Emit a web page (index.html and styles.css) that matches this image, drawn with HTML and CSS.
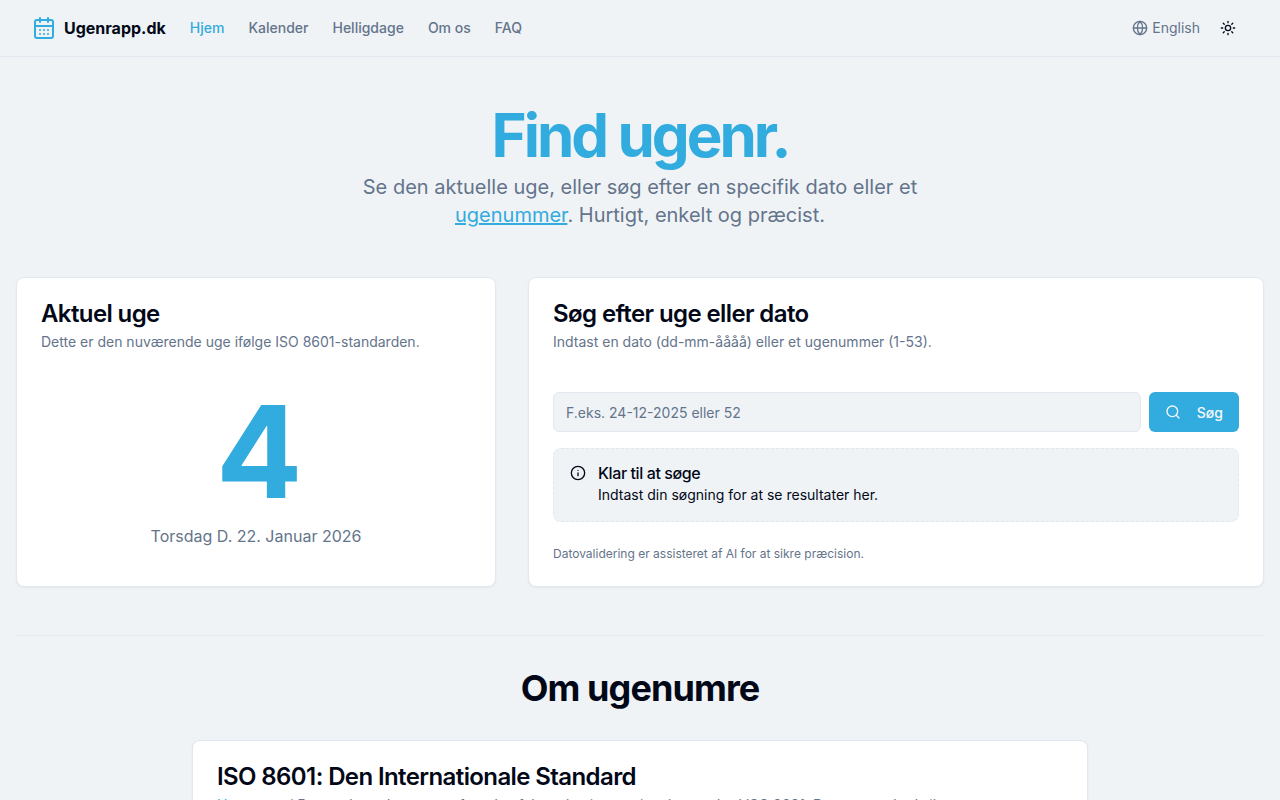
FILE: index.html
```html
<!DOCTYPE html>
<html lang="da">

<head>
    <meta charset="UTF-8">
    <meta name="viewport" content="width=device-width, initial-scale=1.0">
    <title>Ugenrapp.dk</title>
    <link rel="stylesheet" href="styles.css">
</head>

<body>
    <header class="site-header">
        <a class="brand" href="#">
            <svg class="icon icon-brand" viewBox="0 0 24 24" aria-hidden="true">
                <path d="M8 2v4M16 2v4" />
                <rect width="18" height="18" x="3" y="4" rx="2" />
                <path d="M3 10h18M8 14h.01M12 14h.01M16 14h.01M8 18h.01M12 18h.01M16 18h.01" />
            </svg>
            Ugenrapp.dk
        </a>
        <nav class="main-nav">
            <a class="active" href="#">Hjem</a>
            <a href="#kalender">Kalender</a>
            <a href="#helligdage">Helligdage</a>
            <a href="#om-os">Om os</a>
            <a href="#faq">FAQ</a>
        </nav>
        <div class="header-tools">
            <a class="language" href="#en">
                <svg class="icon" viewBox="0 0 24 24" aria-hidden="true">
                    <circle cx="12" cy="12" r="10" />
                    <path d="M12 2a14.5 14.5 0 0 0 0 20 14.5 14.5 0 0 0 0-20M2 12h20" />
                </svg>
                English
            </a>
            <button class="theme-button" type="button" aria-label="Skift tema">
                <svg class="icon" viewBox="0 0 24 24" aria-hidden="true">
                    <circle cx="12" cy="12" r="4" />
                    <path d="M12 2v2M12 20v2M4.93 4.93l1.41 1.41M17.66 17.66l1.41 1.41M2 12h2M20 12h2M6.34 17.66l-1.41 1.41M19.07 4.93l-1.41 1.41" />
                </svg>
            </button>
        </div>
    </header>

    <main>
        <section class="hero">
            <h1>Find ugenr.</h1>
            <p>Se den aktuelle uge, eller søg efter en specifik dato eller et <a href="#om">ugenummer</a>. Hurtigt, enkelt og præcist.</p>
        </section>

        <div class="cards">
            <section class="card">
                <h2>Aktuel uge</h2>
                <p class="card-text">Dette er den nuværende uge ifølge ISO 8601-standarden.</p>
                <div class="week">
                    <div class="week-number">4</div>
                    <p class="week-date">Torsdag D. 22. Januar 2026</p>
                </div>
            </section>

            <section class="card">
                <h2>Søg efter uge eller dato</h2>
                <p class="card-text">Indtast en dato (dd-mm-åååå) eller et ugenummer (1-53).</p>
                <form class="search-form">
                    <input type="text" aria-label="Dato eller ugenummer" placeholder="F.eks. 24-12-2025 eller 52">
                    <button class="search-button" type="submit">
                        <svg class="icon" viewBox="0 0 24 24" aria-hidden="true">
                            <circle cx="11" cy="11" r="8" />
                            <path d="m21 21-4.3-4.3" />
                        </svg>
                        Søg
                    </button>
                </form>
                <div class="alert">
                    <svg class="icon" viewBox="0 0 24 24" aria-hidden="true">
                        <circle cx="12" cy="12" r="10" />
                        <path d="M12 16v-4M12 8h.01" />
                    </svg>
                    <div>
                        <h3>Klar til at søge</h3>
                        <p>Indtast din søgning for at se resultater her.</p>
                    </div>
                </div>
                <p class="note">Datovalidering er assisteret af AI for at sikre præcision.</p>
            </section>
        </div>

        <section class="about" id="om">
            <h2 class="about-title">Om ugenumre</h2>
            <article class="card">
                <h3 class="card-title">ISO 8601: Den Internationale Standard</h3>
                <p class="card-text"><a href="#kalender">Ugenumre</a> i Danmark og det meste af verden følger den internationale standard ISO 8601. Denne standard sikrer</p>
            </article>
        </section>
    </main>
</body>

</html>
```
FILE: styles.css
```css
* {
    box-sizing: border-box;
}

body {
    margin: 0;
    font-family: 'Inter', sans-serif;
    font-size: 16px;
    line-height: 24px;
    color: #020817;
    background-color: #eff3f6;
}

h1,
h2,
h3,
p {
    margin: 0;
}

a {
    color: #32abde;
    text-decoration: none;
}

button,
input {
    font-family: inherit;
    font-size: 14px;
}

.icon {
    width: 16px;
    height: 16px;
    flex-shrink: 0;
    fill: none;
    stroke: currentColor;
    stroke-width: 2;
    stroke-linecap: round;
    stroke-linejoin: round;
}

/* Header */
.site-header {
    display: flex;
    align-items: center;
    gap: 24px;
    height: 57px;
    padding: 0 32px;
    border-bottom: 1px solid #e2e8f0;
}

.brand {
    display: flex;
    align-items: center;
    gap: 8px;
    font-weight: 700;
    color: #020817;
}

.icon-brand {
    width: 24px;
    height: 24px;
    color: #32abde;
}

.main-nav {
    display: flex;
    gap: 24px;
    font-size: 14px;
    font-weight: 500;
}

.main-nav a,
.language {
    color: #64748b;
}

.main-nav .active {
    color: #32abde;
}

.header-tools {
    display: flex;
    align-items: center;
    gap: 8px;
    margin-left: auto;
}

.language {
    display: flex;
    align-items: center;
    gap: 4px;
    font-size: 14px;
}

.theme-button {
    display: flex;
    align-items: center;
    justify-content: center;
    width: 40px;
    height: 40px;
    padding: 0;
    border: none;
    background: none;
    color: #020817;
    cursor: pointer;
}

/* Hero */
main {
    padding: 48px 16px;
}

.hero {
    max-width: 600px;
    margin: 0 auto 48px;
    text-align: center;
}

.hero h1 {
    font-size: 60px;
    line-height: 60px;
    font-weight: 700;
    letter-spacing: -0.05em;
    color: #32abde;
}

.hero p {
    margin-top: 8px;
    font-size: 20px;
    line-height: 28px;
    color: #64748b;
}

.hero a {
    text-decoration: underline;
}

/* Cards */
.cards {
    display: grid;
    grid-template-columns: 480fr 736fr;
    gap: 32px;
}

.card {
    padding: 24px;
    border: 1px solid #e2e8f0;
    border-radius: 8px;
    background-color: #fff;
    box-shadow: 0 1px 2px rgba(0, 0, 0, 0.05);
}

.card h2,
.card-title {
    font-size: 24px;
    line-height: 24px;
    font-weight: 600;
    letter-spacing: -0.025em;
}

.card-text {
    margin-top: 6px;
    font-size: 14px;
    line-height: 20px;
    color: #64748b;
}

.week {
    padding: 36px 0 12px;
    text-align: center;
}

.week-number {
    font-size: 128px;
    line-height: 128px;
    font-weight: 700;
    letter-spacing: -0.05em;
    color: #32abde;
}

.week-date {
    margin-top: 8px;
    color: #64748b;
}

.search-form {
    display: flex;
    gap: 8px;
    margin-top: 40px;
}

.search-form input {
    flex: 1;
    min-width: 0;
    height: 40px;
    padding: 8px 12px;
    border: 1px solid #e2e8f0;
    border-radius: 6px;
    background-color: #eff3f6;
    color: #020817;
}

.search-form input::placeholder {
    color: #64748b;
}

.search-button {
    display: flex;
    align-items: center;
    gap: 16px;
    height: 40px;
    padding: 0 16px;
    border: none;
    border-radius: 6px;
    background-color: #32abde;
    color: #f8fafc;
    font-weight: 500;
    cursor: pointer;
}

.alert {
    display: flex;
    gap: 12px;
    margin-top: 16px;
    padding: 16px;
    border: 1px dashed #e2e8f0;
    border-radius: 8px;
    background-color: #eff3f6;
}

.alert h3 {
    font-size: 16px;
    line-height: 16px;
    font-weight: 500;
    letter-spacing: -0.025em;
}

.alert p {
    margin-top: 4px;
    font-size: 14px;
    line-height: 20px;
}

.note {
    margin-top: 24px;
    font-size: 12px;
    line-height: 16px;
    color: #64748b;
}

/* About */
.about {
    margin-top: 48px;
    padding-top: 32px;
    border-top: 1px solid #e2e8f0;
}

.about-title {
    margin-bottom: 32px;
    font-size: 36px;
    line-height: 40px;
    font-weight: 700;
    letter-spacing: -0.025em;
    text-align: center;
}

.about .card {
    max-width: 896px;
    margin: 0 auto;
}
```
